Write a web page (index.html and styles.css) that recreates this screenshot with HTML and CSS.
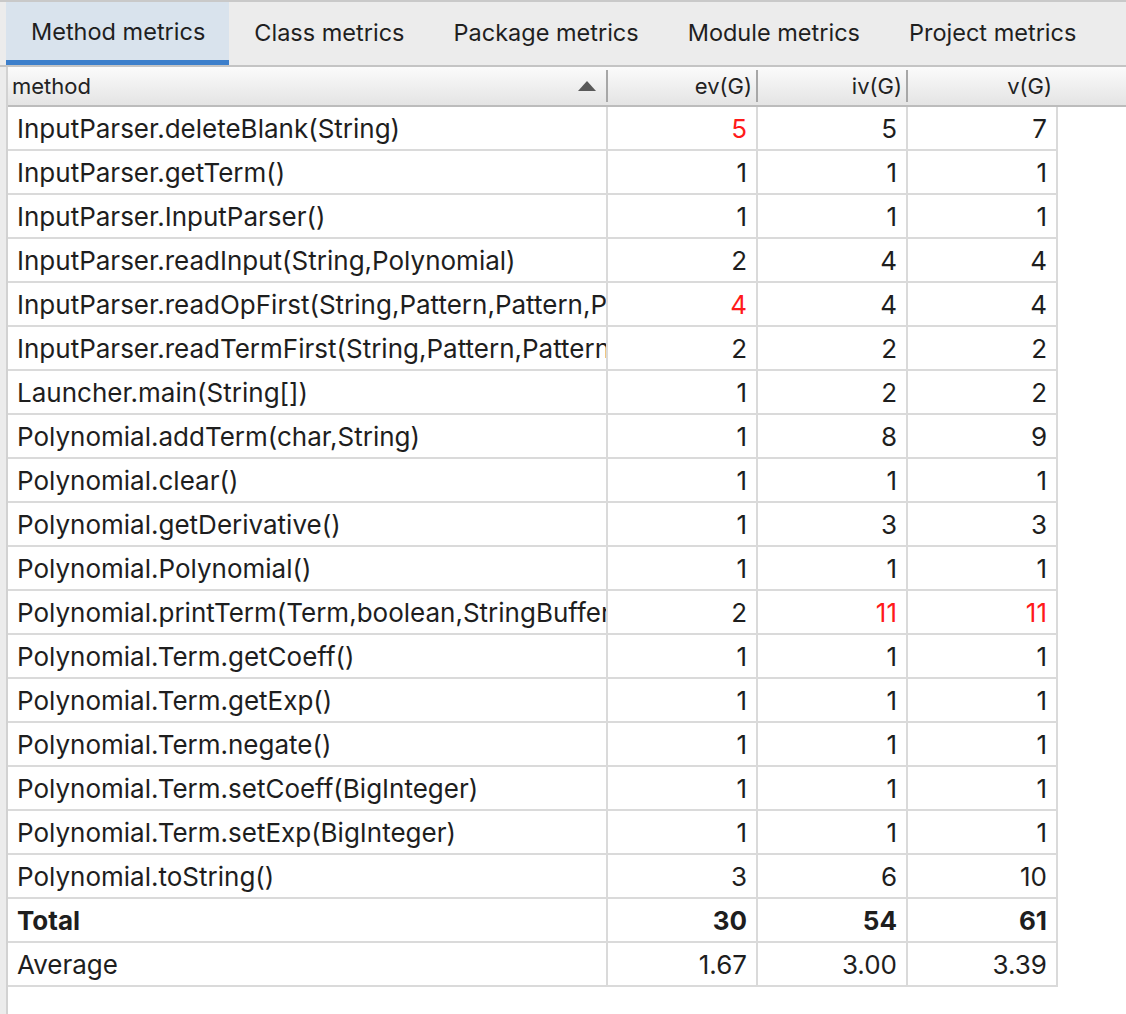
FILE: index.html
```html
<!DOCTYPE html>
<html>
<head>
<meta charset="utf-8">
<link rel="stylesheet" href="styles.css">
</head>
<body>
<div class="topline"></div>
<div class="tabs">
  <div class="tab active">Method metrics</div>
  <div class="tab">Class metrics</div>
  <div class="tab">Package metrics</div>
  <div class="tab">Module metrics</div>
  <div class="tab">Project metrics</div>
</div>
<div class="main">
  <div class="strip"></div>
  <div class="panel">
    <div class="header">
      <div class="hcell hmethod"><span>method</span><span class="sort"></span></div>
      <div class="hcell num">ev(G)</div>
      <div class="hcell num">iv(G)</div>
      <div class="hcell num last">v(G)</div>
    </div>
    <div class="grid">
      <div class="cell">InputParser.deleteBlank(String)</div><div class="cell num red">5</div><div class="cell num">5</div><div class="cell num">7</div>
      <div class="cell">InputParser.getTerm()</div><div class="cell num">1</div><div class="cell num">1</div><div class="cell num">1</div>
      <div class="cell">InputParser.InputParser()</div><div class="cell num">1</div><div class="cell num">1</div><div class="cell num">1</div>
      <div class="cell">InputParser.readInput(String,Polynomial)</div><div class="cell num">2</div><div class="cell num">4</div><div class="cell num">4</div>
      <div class="cell">InputParser.readOpFirst(String,Pattern,Pattern,Pattern)</div><div class="cell num red">4</div><div class="cell num">4</div><div class="cell num">4</div>
      <div class="cell">InputParser.readTermFirst(String,Pattern,Pattern,Pattern)</div><div class="cell num">2</div><div class="cell num">2</div><div class="cell num">2</div>
      <div class="cell">Launcher.main(String[])</div><div class="cell num">1</div><div class="cell num">2</div><div class="cell num">2</div>
      <div class="cell">Polynomial.addTerm(char,String)</div><div class="cell num">1</div><div class="cell num">8</div><div class="cell num">9</div>
      <div class="cell">Polynomial.clear()</div><div class="cell num">1</div><div class="cell num">1</div><div class="cell num">1</div>
      <div class="cell">Polynomial.getDerivative()</div><div class="cell num">1</div><div class="cell num">3</div><div class="cell num">3</div>
      <div class="cell">Polynomial.Polynomial()</div><div class="cell num">1</div><div class="cell num">1</div><div class="cell num">1</div>
      <div class="cell">Polynomial.printTerm(Term,boolean,StringBuffer)</div><div class="cell num">2</div><div class="cell num red">11</div><div class="cell num red">11</div>
      <div class="cell">Polynomial.Term.getCoeff()</div><div class="cell num">1</div><div class="cell num">1</div><div class="cell num">1</div>
      <div class="cell">Polynomial.Term.getExp()</div><div class="cell num">1</div><div class="cell num">1</div><div class="cell num">1</div>
      <div class="cell">Polynomial.Term.negate()</div><div class="cell num">1</div><div class="cell num">1</div><div class="cell num">1</div>
      <div class="cell">Polynomial.Term.setCoeff(BigInteger)</div><div class="cell num">1</div><div class="cell num">1</div><div class="cell num">1</div>
      <div class="cell">Polynomial.Term.setExp(BigInteger)</div><div class="cell num">1</div><div class="cell num">1</div><div class="cell num">1</div>
      <div class="cell">Polynomial.toString()</div><div class="cell num">3</div><div class="cell num">6</div><div class="cell num">10</div>
      <div class="cell bold">Total</div><div class="cell num bold">30</div><div class="cell num bold">54</div><div class="cell num bold">61</div>
      <div class="cell">Average</div><div class="cell num">1.67</div><div class="cell num">3.00</div><div class="cell num">3.39</div>
    </div>
  </div>
</div>
</body>
</html>
```
FILE: styles.css
```css
html, body {
  margin: 0;
  padding: 0;
  background: #ffffff;
  font-family: Inter, "Liberation Sans", sans-serif;
  color: #1e1e1e;
}
body {
  height: 1014px;
  overflow: hidden;
}
.topline {
  height: 2px;
  background: #c9c9c9;
}
.tabs {
  display: flex;
  height: 63px;
  padding-left: 6px;
  background: #ececec;
  border-bottom: 2px solid #c4c4c4;
}
.tab {
  display: flex;
  align-items: center;
  padding: 0 24px 2px 25px;
  font-size: 23.5px;
  color: #1f1f1f;
  box-sizing: border-box;
  height: 63px;
}
.tab.active {
  background: #d9e3ed;
  border-bottom: 5px solid #3d7fcb;
  padding-bottom: 0;
}
.main {
  display: flex;
  height: 947px;
}
.strip {
  width: 6px;
  background: #ececec;
  border-right: 2px solid #d2d2d2;
  flex: none;
}
.panel {
  flex: 1;
  display: flex;
  flex-direction: column;
}
.header {
  display: grid;
  grid-template-columns: 600px 150px 150px 1fr;
  height: 38px;
  border-bottom: 2px solid #bcbcbc;
  background: linear-gradient(#fbfbfb, #e4e4e4);
  font-size: 22px;
  color: #222;
}
.hcell {
  display: flex;
  align-items: center;
  position: relative;
  padding: 0 6px 0 4px;
}
.hcell.num {
  justify-content: flex-end;
}
.hcell.last {
  width: 150px;
  box-sizing: border-box;
}
.hmethod {
  justify-content: space-between;
  padding-right: 12px;
}
.hcell::after {
  content: "";
  position: absolute;
  right: 0;
  top: 3px;
  bottom: 3px;
  width: 2px;
  background: #a7a7a7;
}
.hcell.last::after {
  display: none;
}
.sort {
  width: 0;
  height: 0;
  border-left: 9px solid transparent;
  border-right: 9px solid transparent;
  border-bottom: 10px solid #595959;
}
.grid {
  display: grid;
  grid-template-columns: 598px 148px 148px 148px;
  grid-auto-rows: 42px;
  gap: 2px;
  padding: 0 2px 2px 0;
  background: #dadada;
  width: max-content;
}
.cell {
  background: #ffffff;
  display: flex;
  align-items: center;
  padding: 0 9px;
  font-size: 26px;
  white-space: nowrap;
  overflow: hidden;
  color: #1e1e1e;
}
.cell.num {
  justify-content: flex-end;
}
.red {
  color: #ff1a1a !important;
}
.bold {
  font-weight: 700;
}
```
